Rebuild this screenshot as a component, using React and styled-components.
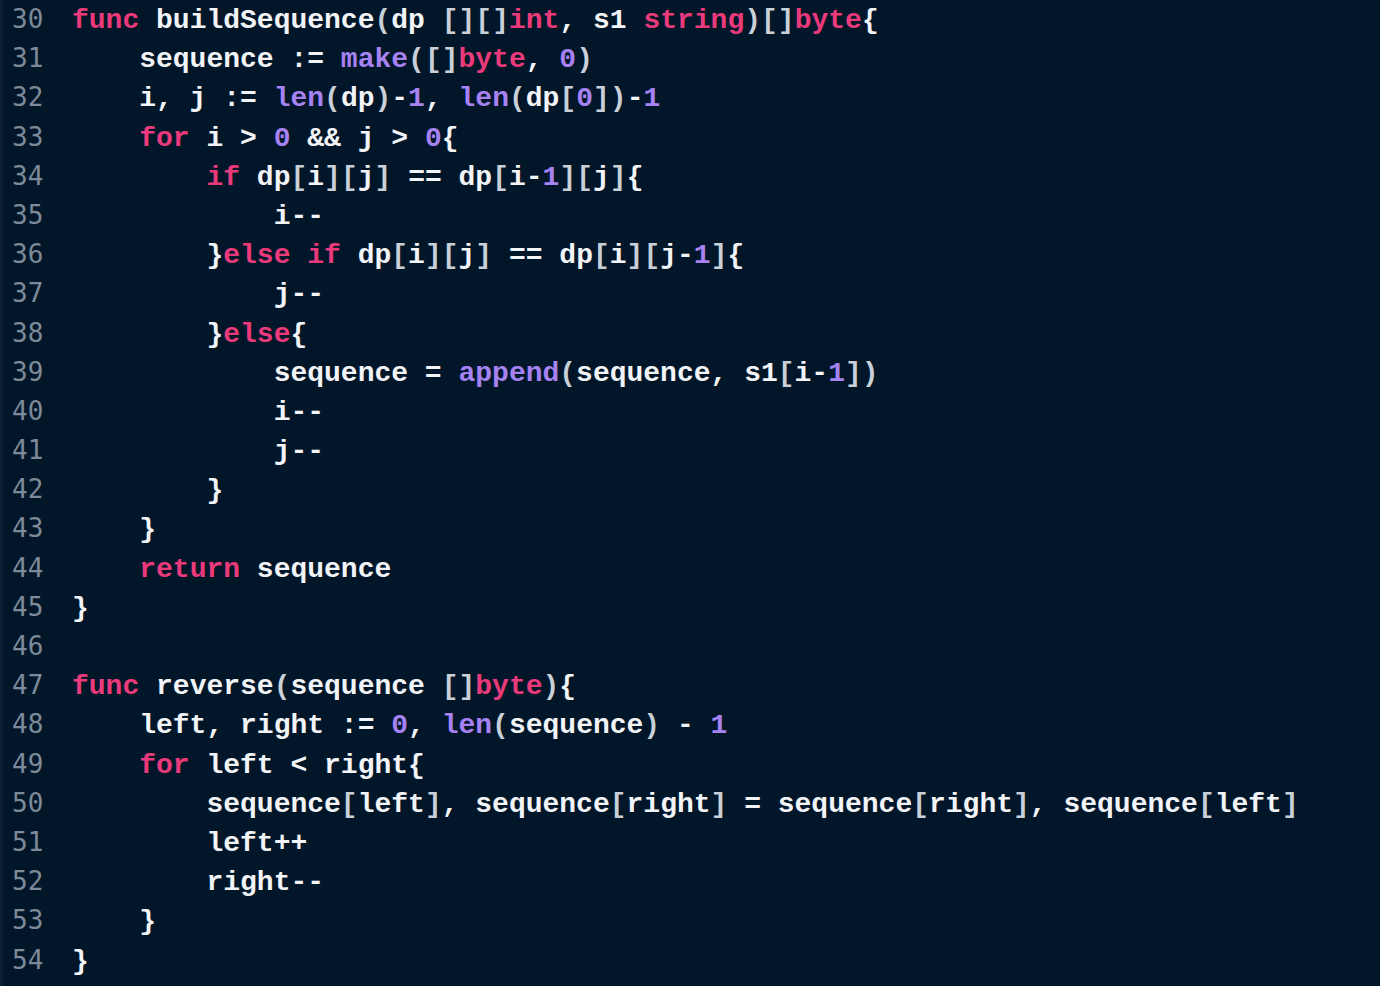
import React from 'react';
import styled, { createGlobalStyle } from 'styled-components';

const GlobalStyle = createGlobalStyle`
  html, body {
    margin: 0;
    padding: 0;
    background: #021629;
  }
`;

const Editor = styled.div`
  width: 1380px;
  height: 986px;
  box-sizing: border-box;
  border-left: 3px solid #0b2034;
  background: #021629;
  overflow: hidden;
`;

const Row = styled.div`
  display: flex;
  align-items: baseline;
  height: 39.2px;
  line-height: 39.2px;
`;

const LineNo = styled.span`
  width: 69px;
  flex: none;
  padding-left: 9px;
  box-sizing: border-box;
  font-family: 'DejaVu Sans Mono', monospace;
  font-size: 26px;
  color: #7d8a99;
`;

const Code = styled.span`
  font-family: 'Liberation Mono', 'Courier New', monospace;
  font-weight: bold;
  font-size: 28px;
  color: #f2f4f7;
  white-space: pre;
`;

const Tok = styled.span`
  color: ${(p) =>
    p.$kind === 'k' ? '#ea3a7b' : p.$kind === 'b' ? '#a682f2' : p.$kind === 'p' ? '#c9d0d8' : '#f2f4f7'};
`;

const k = (t) => ['k', t];
const b = (t) => ['b', t];

const lines = [
  [k('func'), ' buildSequence(dp [][]', k('int'), ', s1 ', k('string'), ')[]', k('byte'), '{'],
  ['    sequence := ', b('make'), '([]', k('byte'), ', ', b('0'), ')'],
  ['    i, j := ', b('len'), '(dp)-', b('1'), ', ', b('len'), '(dp[', b('0'), '])-', b('1')],
  ['    ', k('for'), ' i > ', b('0'), ' && j > ', b('0'), '{'],
  ['        ', k('if'), ' dp[i][j] == dp[i-', b('1'), '][j]{'],
  ['            i--'],
  ['        }', k('else if'), ' dp[i][j] == dp[i][j-', b('1'), ']{'],
  ['            j--'],
  ['        }', k('else'), '{'],
  ['            sequence = ', b('append'), '(sequence, s1[i-', b('1'), '])'],
  ['            i--'],
  ['            j--'],
  ['        }'],
  ['    }'],
  ['    ', k('return'), ' sequence'],
  ['}'],
  [''],
  [k('func'), ' reverse(sequence []', k('byte'), '){'],
  ['    left, right := ', b('0'), ', ', b('len'), '(sequence) - ', b('1')],
  ['    ', k('for'), ' left < right{'],
  ['        sequence[left], sequence[right] = sequence[right], sequence[left]'],
  ['        left++'],
  ['        right--'],
  ['    }'],
  ['}'],
];

// plain text: brackets and parens come out a shade dimmer
const plain = (text, key) =>
  text.split(/([[\]()])/).map((part, i) =>
    part === '' ? null : (
      <Tok key={`${key}-${i}`} $kind={/^[[\]()]$/.test(part) ? 'p' : undefined}>
        {part}
      </Tok>
    )
  );

const App = () => (
  <>
    <GlobalStyle />
    <Editor>
      {lines.map((parts, n) => (
        <Row key={n}>
          <LineNo>{30 + n}</LineNo>
          <Code>
            {parts.map((p, i) =>
              typeof p === 'string' ? (
                plain(p, i)
              ) : (
                <Tok key={i} $kind={p[0]}>
                  {p[1]}
                </Tok>
              )
            )}
            {parts.length === 1 && parts[0] === '' ? ' ' : null}
          </Code>
        </Row>
      ))}
    </Editor>
  </>
);

export default App;
